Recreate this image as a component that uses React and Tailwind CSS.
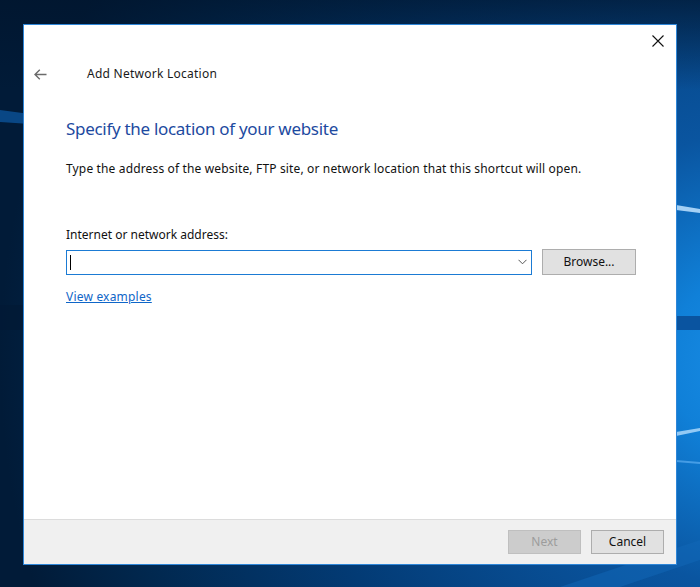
import React from "react";

function Wallpaper() {
  return (
    <svg className="absolute inset-0" width="700" height="587" viewBox="0 0 700 587">
      <defs>
        <radialGradient id="rg" cx="760" cy="360" r="760" gradientUnits="userSpaceOnUse">
          <stop offset="0" stopColor="#1a8fe8" />
          <stop offset="0.12" stopColor="#1080d8" />
          <stop offset="0.3" stopColor="#0a55a0" />
          <stop offset="0.6" stopColor="#033b75" />
          <stop offset="0.85" stopColor="#01284f" />
          <stop offset="1" stopColor="#011b38" />
        </radialGradient>
        <linearGradient id="top" x1="0" y1="0" x2="0" y2="1">
          <stop offset="0" stopColor="#01152d" stopOpacity="0.7" />
          <stop offset="1" stopColor="#01152d" stopOpacity="0" />
        </linearGradient>
      </defs>
      <rect width="700" height="587" fill="url(#rg)" />
      <rect width="700" height="90" fill="url(#top)" />
      <path d="M0 110 L60 118 L60 126 L0 122 Z" fill="#0b5298" opacity="0.8" />
      <path d="M0 305 L60 305 L60 330 L0 330 Z" fill="#011a35" opacity="0.75" />
      <path d="M676 316 L700 316 L700 330 L676 330 Z" fill="#0a4f99" opacity="0.9" />
      <path d="M676 205 L700 209 L700 213 L676 210 Z" fill="#bfe3ff" opacity="0.85" />
      <path d="M676 432 L700 428 L700 431 L676 436 Z" fill="#bfe3ff" opacity="0.75" />
      <path d="M676 460 L700 462 L700 464 L676 462 Z" fill="#7cc4ff" opacity="0.5" />
      <path d="M560 587 L700 540 L700 560 L620 587 Z" fill="#1267b8" opacity="0.5" />
    </svg>
  );
}

export default function App() {
  return (
    <div
      className="relative w-[700px] h-[587px] overflow-hidden"
      style={{ fontFamily: '"Noto Sans", "Open Sans", sans-serif' }}
    >
      <Wallpaper />
      <div className="relative pt-[24px] pl-[23px]">
        <div className="w-[654px] h-[541px] border border-[#2e86d8] bg-white flex flex-col">
          <div className="h-[32px] flex justify-end">
            <div className="w-[36px] h-[32px] flex items-center justify-center">
              <svg width="12" height="12" viewBox="0 0 12 12">
                <path d="M0.5 0.5 L11.5 11.5 M11.5 0.5 L0.5 11.5" stroke="#111" strokeWidth="1.1" fill="none" />
              </svg>
            </div>
          </div>
          <div className="h-[34px] flex items-center">
            <div className="w-[32px] flex justify-center">
              <svg width="13" height="11" viewBox="0 0 13 11">
                <path d="M12.5 5.5 H1.2 M5.8 0.8 L1 5.5 L5.8 10.2" stroke="#6b6b6b" strokeWidth="1.4" fill="none" />
              </svg>
            </div>
            <div className="ml-[31px] text-[12px] leading-[16px] tracking-[0.25px] text-[#1a1a1a]">Add Network Location</div>
          </div>
          <div className="pl-[42px] flex flex-col">
            <div className="mt-[26px] text-[17px] leading-[24px] tracking-[-0.3px] text-[#1d4aa0]">
              Specify the location of your website
            </div>
            <div className="mt-[20px] text-[12px] leading-[16px] tracking-[0.15px] text-[#111]">
              Type the address of the website, FTP site, or network location that this shortcut will open.
            </div>
            <div className="mt-[50px] text-[12px] leading-[16px] text-[#111]">Internet or network address:</div>
            <div className="mt-[6px] flex items-center">
              <div className="w-[466px] h-[25px] border border-[#1b7bd4] flex items-center">
                <div className="ml-[3px] w-px h-[15px] bg-black" />
                <div className="flex-1" />
                <svg className="mr-[4px]" width="9" height="6" viewBox="0 0 9 6">
                  <path d="M0.5 0.8 L4.5 4.8 L8.5 0.8" stroke="#555" strokeWidth="1" fill="none" />
                </svg>
              </div>
              <div className="ml-[10px] w-[94px] h-[26px] bg-[#e1e1e1] border border-[#adadad] flex items-center justify-center text-[12px] text-[#111]">
                Browse...
              </div>
            </div>
            <div className="mt-[14px] text-[12px] leading-[16px] tracking-[0.2px] text-[#0f66c8] underline">
              <span>View examples</span>
            </div>
          </div>
          <div className="flex-1" />
          <div className="h-[45px] border-t border-[#dcdcdc] bg-[#f0f0f0] flex items-start justify-end pt-[10px] pr-[12px] gap-[10px]">
            <div className="w-[73px] h-[24px] bg-[#cccccc] border border-[#bfbfbf] flex items-center justify-center text-[12px] text-[#9c9c9c]">
              Next
            </div>
            <div className="w-[73px] h-[24px] bg-[#e1e1e1] border border-[#adadad] flex items-center justify-center text-[12px] text-[#111]">
              Cancel
            </div>
          </div>
        </div>
      </div>
    </div>
  );
}
